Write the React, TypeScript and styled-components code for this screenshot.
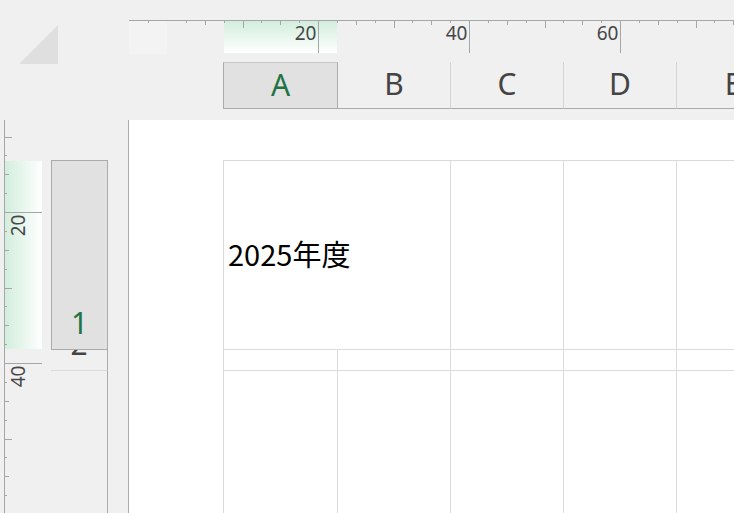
import React from "react";
import styled, { createGlobalStyle } from "styled-components";

const GlobalStyle = createGlobalStyle`
  html, body {
    margin: 0;
    padding: 0;
    background: #f0f0f0;
  }

  body {
    font-family: "Noto Sans", "Open Sans", sans-serif;
  }

  * {
    box-sizing: border-box;
  }
`;

// one ruler step (2.5 units), 20 units = 151px
const STEP = 151 / 8;
const COLUMNS = ["A", "B", "C", "D", "E"];
const RULER_INK = "#a6a6a6";
const LABEL_INK = "#474747";

const tickLength = (k: number, major: number) => {
  if (k % 8 === 0) return major;
  if (k % 4 === 0) return 7;
  if (k % 2 === 0) return 4;
  return 2;
};

const range = (from: number, to: number) =>
  Array.from({ length: to - from + 1 }, (_, i) => from + i);

const TopRuler = () => {
  const origin = 38;
  return (
    <RulerSvg width={605} height={54}>
      <defs>
        <linearGradient id="topSel" x1="0" y1="0" x2="0" y2="1">
          <stop offset="0" stopColor="#d2eedd" />
          <stop offset="1" stopColor="#ffffff" />
        </linearGradient>
      </defs>
      <rect x={0} y={21} width={38} height={33} fill="#f3f3f3" />
      <rect x={95} y={21} width={113} height={32} fill="url(#topSel)" />
      <rect x={0} y={20} width={605} height={1} fill={RULER_INK} />
      {range(-1, 31)
        .filter((k) => k !== 0)
        .map((k) => (
          <rect
            key={k}
            x={Math.round(origin + k * STEP)}
            y={21}
            width={1}
            height={tickLength(k, 32)}
            fill={RULER_INK}
          />
        ))}
      {[8, 16, 24].map((k) => (
        <RulerLabel
          key={k}
          x={Math.round(origin + k * STEP) - 1.5}
          y={40}
          textAnchor="end"
        >
          {(k / 8) * 20}
        </RulerLabel>
      ))}
    </RulerSvg>
  );
};

const SideRuler = () => {
  const origin = -59;
  return (
    <RulerSvg width={51} height={393}>
      <defs>
        <linearGradient id="sideSel" x1="0" y1="0" x2="1" y2="0">
          <stop offset="0" stopColor="#d2eedd" />
          <stop offset="1" stopColor="#ffffff" />
        </linearGradient>
      </defs>
      <rect x={5} y={41} width={37} height={188} fill="url(#sideSel)" />
      <rect x={4} y={0} width={1} height={393} fill={RULER_INK} />
      {range(4, 24).map((k) => (
        <rect
          key={k}
          x={5}
          y={Math.round(origin + k * STEP)}
          width={tickLength(k, 37)}
          height={1}
          fill={RULER_INK}
        />
      ))}
      {[8, 16].map((k) => {
        const y = Math.round(origin + k * STEP) + 2.5;
        return (
          <RulerLabel
            key={k}
            x={25}
            y={y}
            textAnchor="end"
            transform={`rotate(-90 25 ${y})`}
          >
            {(k / 8) * 20}
          </RulerLabel>
        );
      })}
    </RulerSvg>
  );
};

const App = () => (
  <>
    <GlobalStyle />
    <Frame>
      <Corner>
        <CornerTriangle />
      </Corner>

      <TopArea>
        <TopRuler />
        <HeaderRow>
          {COLUMNS.map((c, i) => (
            <ColumnHeader key={c} $selected={i === 0}>
              {c}
            </ColumnHeader>
          ))}
        </HeaderRow>
      </TopArea>

      <LeftArea>
        <SideRuler />
        <RowHeaderColumn>
          <RowHeader $selected $height={190}>
            <span>1</span>
          </RowHeader>
          <RowHeader $height={21}>
            <span>2</span>
          </RowHeader>
          <RowHeader $fill />
        </RowHeaderColumn>
      </LeftArea>

      <Page>
        <Sheet>
          {COLUMNS.map((c, i) => (
            <Cell key={`r1${c}`} $spill={i === 0}>
              {i === 0 && <CellText>2025年度</CellText>}
            </Cell>
          ))}
          {COLUMNS.map((c) => (
            <Cell key={`r2${c}`} />
          ))}
          {COLUMNS.map((c) => (
            <Cell key={`r3${c}`} />
          ))}
        </Sheet>
      </Page>
    </Frame>
  </>
);

export default App;

const Frame = styled.div`
  width: 734px;
  height: 513px;
  overflow: hidden;
  display: grid;
  grid-template-columns: 129px minmax(0, 1fr);
  grid-template-rows: 120px minmax(0, 1fr);
  background: #f0f0f0;
`;

const Corner = styled.div`
  padding: 25px 0 0 19px;
`;

const CornerTriangle = styled.div`
  width: 39px;
  height: 39px;
  background: #dfdfdf;
  clip-path: polygon(100% 0, 100% 100%, 0 100%);
`;

const TopArea = styled.div`
  display: flex;
  flex-direction: column;
  min-width: 0;
  overflow: hidden;
`;

const RulerSvg = styled.svg`
  display: block;
  flex-shrink: 0;
`;

const RulerLabel = styled.text`
  font-family: "Noto Sans", "Open Sans", sans-serif;
  font-size: 19px;
  fill: ${LABEL_INK};
`;

const HeaderRow = styled.div`
  display: flex;
  margin-top: 8px;
  padding-left: 94px;
  height: 47px;
`;

const ColumnHeader = styled.div<{ $selected?: boolean }>`
  flex-shrink: 0;
  width: ${(p) => (p.$selected ? 115 : 113)}px;
  height: 47px;
  display: flex;
  align-items: center;
  justify-content: center;
  padding-bottom: 2px;
  font-size: 30px;
  line-height: 30px;
  color: ${(p) => (p.$selected ? "#217346" : "#444444")};
  background: ${(p) => (p.$selected ? "#e1e1e1" : "transparent")};
  border-bottom: 1px solid #ababab;
  border-right: 1px solid ${(p) => (p.$selected ? "#ababab" : "#d4d4d4")};
  border-left: ${(p) => (p.$selected ? "1px solid #ababab" : "none")};
  border-top: ${(p) => (p.$selected ? "1px solid #c8c8c8" : "none")};
`;

const LeftArea = styled.div`
  display: flex;
  border-right: 1px solid #ababab;
  overflow: hidden;
`;

const RowHeaderColumn = styled.div`
  width: 57px;
  flex-shrink: 0;
  padding-top: 40px;
  display: flex;
  flex-direction: column;
`;

const RowHeader = styled.div<{
  $selected?: boolean;
  $height?: number;
  $fill?: boolean;
}>`
  ${(p) => (p.$fill ? "flex: 1;" : `height: ${p.$height}px; flex-shrink: 0;`)}
  display: flex;
  justify-content: center;
  align-items: flex-end;
  padding-bottom: 11px;
  overflow: hidden;
  font-size: 30px;
  line-height: 30px;
  color: ${(p) => (p.$selected ? "#217346" : "#444444")};
  background: ${(p) => (p.$selected ? "#e1e1e1" : "transparent")};
  border-right: 1px solid #ababab;
  border-left: ${(p) => (p.$selected ? "1px solid #ababab" : "none")};
  border-top: ${(p) => (p.$selected ? "1px solid #ababab" : "none")};
  border-bottom: ${(p) =>
    p.$fill ? "none" : `1px solid ${p.$selected ? "#ababab" : "#d8d8d8"}`};

  span {
    display: block;
    flex-shrink: 0;
  }
`;

const Page = styled.div`
  background: #ffffff;
  padding: 40px 0 0 94px;
  overflow: hidden;
  min-width: 0;
`;

const Sheet = styled.div`
  display: grid;
  width: max-content;
  grid-template-columns: 114px repeat(4, 113px);
  grid-template-rows: 189px 21px 200px;
  border-top: 1px solid #dadada;
  border-left: 1px solid #dadada;
`;

const Cell = styled.div<{ $spill?: boolean }>`
  display: flex;
  align-items: center;
  padding-bottom: 4px;
  overflow: visible;
  white-space: nowrap;
  border-bottom: 1px solid #dadada;
  border-right: 1px solid ${(p) => (p.$spill ? "transparent" : "#dadada")};
`;

const CellText = styled.span`
  padding-left: 4px;
  font-family: "Noto Sans CJK JP", "Noto Sans", sans-serif;
  font-size: 29px;
  color: #000000;
`;
